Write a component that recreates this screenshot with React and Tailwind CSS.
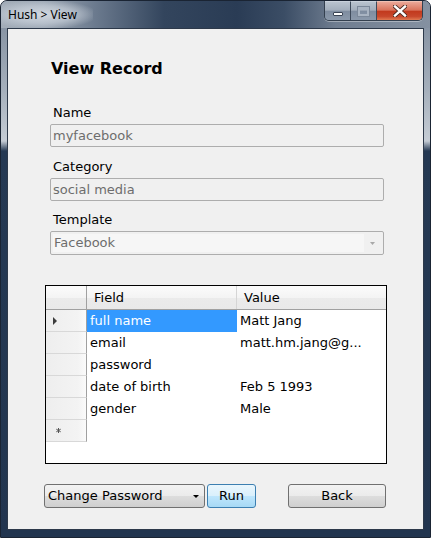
import React from "react";

const ui = "font-['DejaVu_Sans',Verdana,sans-serif]";

const rows = [
  { field: "full name", value: "Matt Jang", current: true },
  { field: "email", value: "matt.hm.jang@g..." },
  { field: "password", value: "" },
  { field: "date of birth", value: "Feb 5 1993" },
  { field: "gender", value: "Male" },
];

const CaptionButtons = () => (
  <div className="flex h-[20px] mr-[2px] rounded-b-[5px] border border-t-0 border-[#34404f] overflow-hidden shadow-[0_1px_0_rgba(255,255,255,0.35)]">
    {/* Minimize */}
    <div className="w-[26px] flex items-center justify-center border-r border-[#3e4a5a] border-t border-t-[#c9d1db] bg-[linear-gradient(to_bottom,#b9c3ce_0%,#a3aebc_45%,#7f8da0_52%,#8b99ab_100%)]">
      <div className="w-[10px] h-[4px] mt-[5px] bg-white border border-[#3a4454] rounded-[1px]" />
    </div>
    {/* Maximize (disabled) */}
    <div className="w-[26px] flex items-center justify-center border-r border-[#3e4a5a] border-t border-t-[#c9d1db] bg-[linear-gradient(to_bottom,#b9c3ce_0%,#a3aebc_45%,#7f8da0_52%,#8b99ab_100%)]">
      <div className="w-[11px] h-[9px] border-2 border-t-[3px] border-[#a9b4c2] shadow-[0_0_0_1px_#7b8899]" />
    </div>
    {/* Close */}
    <div className="w-[45px] flex items-center justify-center border-t border-t-[#f0c0b2] bg-[linear-gradient(to_bottom,#eaa797_0%,#d9735c_45%,#c23a1e_52%,#c8472b_80%,#e07a52_100%)]">
      <svg width="14" height="12" viewBox="0 0 14 12">
        <path d="M2 1.5 L12 10.5 M12 1.5 L2 10.5" stroke="#4a2a22" strokeWidth="4.2" strokeLinecap="square" />
        <path d="M2 1.5 L12 10.5 M12 1.5 L2 10.5" stroke="#ffffff" strokeWidth="2.4" strokeLinecap="square" />
      </svg>
    </div>
  </div>
);

const Field = ({ label, value }) => (
  <>
    <div className="pl-[3px] text-[13px] leading-[16px] text-black">{label}</div>
    <div className="mt-[3px] h-[23px] border border-[#adadad] rounded-[2px] bg-[#f0f0f0] flex items-center pl-[2px] text-[13px] text-[#6d6d6d]">
      {value}
    </div>
  </>
);

const ArrowDown = ({ color, w = 6, h = 3 }) => (
  <svg width={w} height={h} viewBox={`0 0 ${w} ${h}`}>
    <polygon points={`0,0 ${w},0 ${w / 2},${h}`} fill={color} />
  </svg>
);

const DataGrid = () => (
  <div className="mt-[30px] ml-[37px] w-[342px] h-[179px] border border-black bg-white flex flex-col text-[13px]">
    {/* header */}
    <div className="flex h-[24px] border-b border-[#a0a0a0] bg-[linear-gradient(to_bottom,#fbfbfb_0%,#f4f4f4_50%,#ebebeb_51%,#e9e9e9_100%)]">
      <div className="w-[41px] border-r border-[#a0a0a0]" />
      <div className="w-[150px] border-r border-[#d5d5d5] flex items-center pl-[7px]">Field</div>
      <div className="flex-1 flex items-center pl-[7px]">Value</div>
    </div>
    {rows.map((r) => (
      <div key={r.field} className="flex h-[22px]">
        <div className="w-[41px] border-r border-[#a0a0a0] border-b border-b-[#d8d8d8] bg-[linear-gradient(to_right,#eeeeee_0%,#f3f3f3_80%,#fbfbfb_100%)] flex items-center pl-[7px]">
          {r.current && (
            <svg width="4" height="8" viewBox="0 0 4 8">
              <polygon points="0,0 4,4 0,8" fill="#3c3c3c" />
            </svg>
          )}
        </div>
        <div
          className={
            "w-[150px] flex items-center pl-[3px] " +
            (r.current ? "bg-[#3399ff] text-white" : "text-black")
          }
        >
          {r.field}
        </div>
        <div className="flex-1 flex items-center pl-[3px] text-black whitespace-nowrap">{r.value}</div>
      </div>
    ))}
    {/* new row */}
    <div className="flex h-[22px]">
      <div className="w-[41px] border-r border-[#a0a0a0] border-b border-b-[#d8d8d8] bg-[linear-gradient(to_right,#eeeeee_0%,#f3f3f3_80%,#fbfbfb_100%)] flex items-center pl-[10px]">
        <svg width="5" height="5" viewBox="0 0 5 5">
          <path d="M2.5 0 V5 M0.3 1.2 L4.7 3.8 M4.7 1.2 L0.3 3.8" stroke="#555" strokeWidth="1" />
        </svg>
      </div>
    </div>
  </div>
);

export default function App() {
  return (
    <div className="w-[431px] h-[538px] rounded-t-[7px] border border-[#1a2433] bg-[linear-gradient(to_bottom,#7c899a_0px,#a6b0bc_90px,#c5ccd5_140px,#253953_150px,#22354f_100%)] flex flex-col overflow-hidden">
      {/* Title bar */}
      <div className="h-[27px] flex items-start justify-between pr-[5px] bg-[linear-gradient(to_right,#a3adb9_0%,#9aa5b2_10%,#6b7a8e_22%,#33455d_38%,#2a3c55_55%,#3b4d65_66%,#6f7d90_78%,#8591a1_100%)]">
        <div className="h-[27px] flex items-center pl-[7px] pr-[16px] bg-[radial-gradient(ellipse_at_45%_50%,rgba(212,218,225,0.95)_0%,rgba(196,204,214,0.7)_45%,rgba(190,198,208,0)_78%)]">
          <span className="text-[12px] text-black font-['Noto_Sans',sans-serif] leading-none">Hush &gt; View</span>
        </div>
        <CaptionButtons />
      </div>

      {/* Client area */}
      <div className={"mx-[6px] mb-[7px] flex-1 border border-[#2d394a] bg-[#f0f0f0] flex flex-col pt-[30px] " + ui}>
        <h1 className="ml-[43px] text-[16px] leading-[20px] font-bold text-black">View Record</h1>

        <div className="ml-[42px] w-[334px] mt-[26px] flex flex-col">
          <Field label="Name" value="myfacebook" />
          <div className="mt-[12px]" />
          <Field label="Category" value="social media" />
          <div className="mt-[11px]" />
          <div className="pl-[3px] text-[13px] leading-[16px] text-black">Template</div>
          <div className="mt-[3px] h-[24px] border border-[#adadad] rounded-[2px] bg-[#f0f0f0] flex items-center p-[2px]">
            <div className="w-[311px] h-full bg-[#f6f6f6] flex items-center pl-[1px] text-[13px] text-[#6d6d6d]">Facebook</div>
            <div className="flex-1 flex items-center justify-center pt-[1px]">
              <ArrowDown color="#a8a8a8" w={5} h={3} />
            </div>
          </div>
        </div>

        <DataGrid />

        <div className="mt-[20px] ml-[36px] flex text-[13px]">
          <div className="w-[161px] h-[24px] border border-[#707070] rounded-[3px] bg-[linear-gradient(to_bottom,#f2f2f2_0%,#ebebeb_50%,#dddddd_51%,#cfcfcf_100%)] flex items-center justify-between pl-[3px] pr-[5px] text-black">
            <span>Change Password</span>
            <ArrowDown color="#000" w={6} h={3} />
          </div>
          <div className="ml-[2px] w-[49px] h-[24px] border border-[#3c7fb1] rounded-[3px] bg-[linear-gradient(to_bottom,#eaf6fd_0%,#d9f0fc_50%,#bee6fd_51%,#a7d9f5_100%)] flex items-center justify-center text-black">
            Run
          </div>
          <div className="ml-[32px] w-[98px] h-[24px] border border-[#707070] rounded-[3px] bg-[linear-gradient(to_bottom,#f2f2f2_0%,#ebebeb_50%,#dddddd_51%,#cfcfcf_100%)] flex items-center justify-center text-black">
            Back
          </div>
        </div>
      </div>
    </div>
  );
}
